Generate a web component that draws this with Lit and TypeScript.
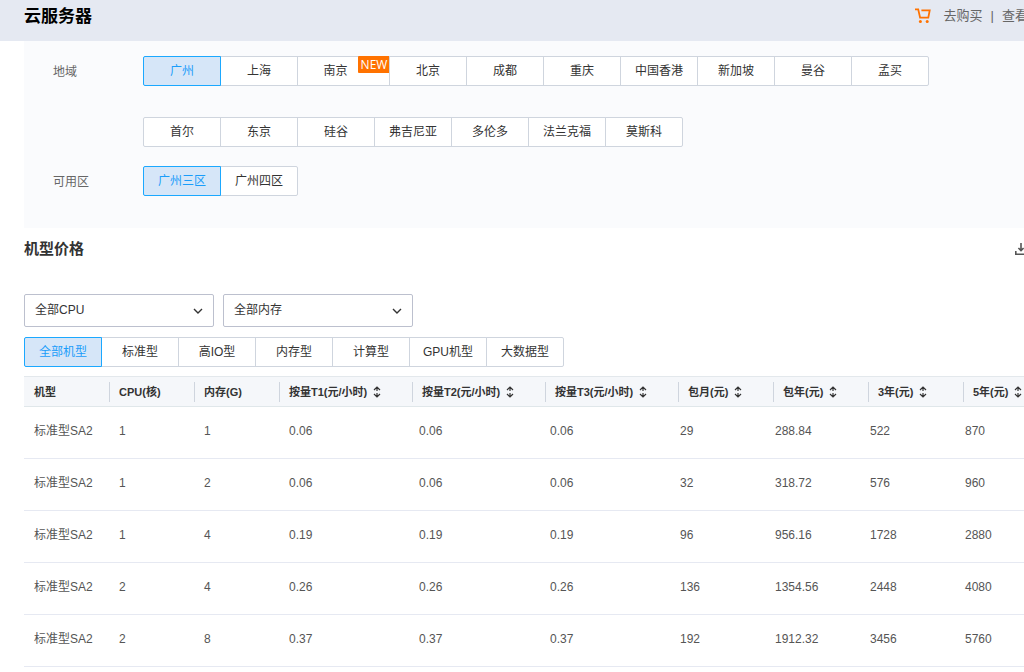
import { LitElement, html, css, svg } from "lit";
import { customElement, property, state } from "lit/decorators.js";
import { classMap } from "lit/directives/class-map.js";

interface Option {
  label: string;
  isNew?: boolean;
}

const REGIONS: Option[][] = [
  [
    { label: "广州" },
    { label: "上海" },
    { label: "南京", isNew: true },
    { label: "北京" },
    { label: "成都" },
    { label: "重庆" },
    { label: "中国香港" },
    { label: "新加坡" },
    { label: "曼谷" },
    { label: "孟买" },
  ],
  [
    { label: "首尔" },
    { label: "东京" },
    { label: "硅谷" },
    { label: "弗吉尼亚" },
    { label: "多伦多" },
    { label: "法兰克福" },
    { label: "莫斯科" },
  ],
];

const ZONES: Option[] = [{ label: "广州三区" }, { label: "广州四区" }];

const MODELS: Option[] = [
  { label: "全部机型" },
  { label: "标准型" },
  { label: "高IO型" },
  { label: "内存型" },
  { label: "计算型" },
  { label: "GPU机型" },
  { label: "大数据型" },
];

const COLUMNS = [
  { label: "机型" },
  { label: "CPU(核)" },
  { label: "内存(G)" },
  { label: "按量T1(元/小时)", sortable: true },
  { label: "按量T2(元/小时)", sortable: true },
  { label: "按量T3(元/小时)", sortable: true },
  { label: "包月(元)", sortable: true },
  { label: "包年(元)", sortable: true },
  { label: "3年(元)", sortable: true },
  { label: "5年(元)", sortable: true },
];

const ROWS = [
  ["标准型SA2", "1", "1", "0.06", "0.06", "0.06", "29", "288.84", "522", "870"],
  ["标准型SA2", "1", "2", "0.06", "0.06", "0.06", "32", "318.72", "576", "960"],
  ["标准型SA2", "1", "4", "0.19", "0.19", "0.19", "96", "956.16", "1728", "2880"],
  ["标准型SA2", "2", "4", "0.26", "0.26", "0.26", "136", "1354.56", "2448", "4080"],
  ["标准型SA2", "2", "8", "0.37", "0.37", "0.37", "192", "1912.32", "3456", "5760"],
];

/** A joined row of buttons of which one is selected. */
@customElement("button-group")
export class ButtonGroup extends LitElement {
  @property({ attribute: false }) options: Option[] = [];
  @property() value = "";

  static styles = css`
    :host {
      display: flex;
    }
    .option {
      position: relative;
      box-sizing: border-box;
      min-width: 78px;
      height: 30px;
      margin: 0 0 0 -1px;
      padding: 0 10px;
      border: 1px solid #cfd5de;
      background: #fff;
      color: #333;
      font: inherit;
      line-height: 28px;
      white-space: nowrap;
      cursor: pointer;
    }
    .option:first-child {
      margin-left: 0;
      border-radius: 2px 0 0 2px;
    }
    .option:last-child {
      border-radius: 0 2px 2px 0;
    }
    .option.new {
      min-width: 93px;
      padding-right: 26px;
    }
    .option.selected {
      z-index: 1;
      border-color: #1ba8ff;
      background: #d6e6f8;
      color: #1a9dfa;
    }
    .badge {
      position: absolute;
      top: -1px;
      right: -1px;
      width: 32px;
      border-radius: 1px;
      background: #ff7200;
      color: #fff;
      font: 12px/17px "Open Sans", "Noto Sans", sans-serif;
      text-align: center;
    }
  `;

  private pick(label: string) {
    this.dispatchEvent(new CustomEvent("pick", { detail: label }));
  }

  render() {
    return this.options.map(
      (o) => html`<button
        type="button"
        class=${classMap({ option: true, new: !!o.isNew, selected: o.label === this.value })}
        aria-pressed=${o.label === this.value}
        @click=${() => this.pick(o.label)}
      >${o.label}${o.isNew ? html`<span class="badge">NEW</span>` : ""}</button>`
    );
  }
}

@customElement("app-root")
export class AppRoot extends LitElement {
  @state() private region = "广州";
  @state() private zone = "广州三区";
  @state() private model = "全部机型";

  static styles = css`
    :host {
      display: block;
      overflow: hidden;
      min-height: 100vh;
      background: #fff;
      color: #333;
      font: 12px/18px "Liberation Sans", "Noto Sans CJK SC", sans-serif;
    }
    .page {
      min-width: 1052px;
    }
    .topbar {
      display: flex;
      align-items: flex-start;
      justify-content: space-between;
      box-sizing: border-box;
      height: 41px;
      padding: 4px 24px 0;
      background: #e5e9f2;
    }
    .title {
      margin: 0;
      color: #000;
      font-size: 17px;
      line-height: 26px;
    }
    .actions {
      display: flex;
      align-items: center;
      gap: 8px;
      color: #666;
      font-size: 13px;
      line-height: 24px;
    }
    .link {
      color: inherit;
      text-decoration: none;
    }
    .buy {
      display: flex;
      align-items: center;
      gap: 13px;
    }
    .main {
      padding: 0 24px;
    }
    .filters {
      display: grid;
      grid-template-columns: 90px 1fr;
      align-items: start;
      row-gap: 19px;
      padding: 15px 0 32px 29px;
      background: #fafbfd;
    }
    .label {
      color: #666;
      line-height: 32px;
      height: 30px;
    }
    .region-rows {
      display: grid;
      gap: 31px;
    }
    .section-head {
      display: flex;
      align-items: center;
      justify-content: space-between;
      padding: 8px 0 32px;
    }
    .section-title {
      margin: 0;
      font-size: 15px;
      line-height: 26px;
    }
    .download {
      display: flex;
      padding: 0;
      border: 0;
      background: none;
      cursor: pointer;
    }
    .selects {
      display: flex;
      gap: 9px;
      margin-bottom: 10px;
    }
    .select-box {
      display: grid;
      align-items: center;
      width: 190px;
    }
    .select {
      grid-area: 1 / 1;
      appearance: none;
      height: 33px;
      padding: 0 30px 1px 10px;
      border: 1px solid #bcc0ce;
      border-radius: 2px;
      background: #fff;
      color: #333;
      font: inherit;
    }
    .chevron {
      grid-area: 1 / 1;
      justify-self: end;
      margin-right: 11px;
      pointer-events: none;
    }
    .table,
    .head,
    .body {
      display: block;
    }
    .table {
      margin-top: 9px;
    }
    .row {
      display: grid;
      align-items: center;
    }
    .head .row {
      grid-template-columns: repeat(3, 85px) repeat(3, 133px) repeat(3, 95px) minmax(66px, 1fr);
      height: 29px;
      border-top: 1px solid #e3e8ec;
      border-bottom: 1px solid #e0e7ea;
      background: #f5f7fa;
    }
    .body .row {
      grid-template-columns: repeat(3, 85px) 130px 131px 130px repeat(3, 95px) minmax(66px, 1fr);
      height: 51px;
      border-bottom: 1px solid #e6e9f2;
    }
    .th {
      box-sizing: border-box;
      height: 20px;
      padding: 0 0 0 9px;
      border-left: 1px solid #cfd5de;
      font-size: 11px;
      font-weight: bold;
      line-height: 20px;
      text-align: left;
      white-space: nowrap;
    }
    .th:first-child {
      border-left-color: transparent;
    }
    .sort {
      display: flex;
      align-items: center;
      gap: 6px;
      padding: 0;
      border: 0;
      background: none;
      color: inherit;
      font: inherit;
      cursor: pointer;
    }
    .td {
      padding: 0 0 4px 10px;
      color: #555;
    }
  `;

  private sortIcon() {
    return html`<svg width="8" height="12" viewBox="0 0 8 12" fill="none" stroke="#333" stroke-width="1.2">
      ${svg`<path d="M4 5V1M1 4l3-3 3 3M4 7v4M1 8l3 3 3-3" />`}
    </svg>`;
  }

  private selectBox(name: string, text: string) {
    return html`<label class="select-box">
      <select class="select" aria-label=${name}><option>${text}</option></select>
      <svg class="chevron" width="10" height="8" viewBox="0 0 10 8" fill="none" stroke="#333" stroke-width="1.4">
        <path d="M1 2l4 4 4-4" />
      </svg>
    </label>`;
  }

  render() {
    return html`
      <div class="page">
        <header class="topbar">
          <h1 class="title">云服务器</h1>
          <nav class="actions">
            <a class="link buy" href="#buy">
              <svg width="16" height="16" viewBox="0 0 16 16" fill="none" stroke="#ff7200" stroke-width="1.8">
                <path d="M0 1.4h3.2l1.9 8.3h8.2l1.4-7.4H6.4" />
                <circle cx="5.4" cy="13.6" r="1.5" fill="#ff7200" stroke="none" />
                <circle cx="12.2" cy="13.6" r="1.5" fill="#ff7200" stroke="none" />
              </svg>
              <span>去购买</span>
            </a>
            <span>|</span>
            <a class="link" href="#view">查看</a>
          </nav>
        </header>
        <main class="main">
          <section class="filters">
            <span class="label">地域</span>
            <div class="region-rows">
              ${REGIONS.map(
                (r) => html`<button-group
                  .options=${r}
                  .value=${this.region}
                  @pick=${(e: CustomEvent) => (this.region = e.detail)}
                ></button-group>`
              )}
            </div>
            <span class="label">可用区</span>
            <button-group
              .options=${ZONES}
              .value=${this.zone}
              @pick=${(e: CustomEvent) => (this.zone = e.detail)}
            ></button-group>
          </section>
          <div class="section-head">
            <h2 class="section-title">机型价格</h2>
            <button class="download" type="button" aria-label="下载">
              <svg width="14" height="14" viewBox="0 0 14 14" fill="none" stroke="#555" stroke-width="1.6">
                <path d="M7 1v7M4.4 6L7 8.6 9.6 6M1.8 9v3.2h10.4V9" />
              </svg>
            </button>
          </div>
          <div class="selects">
            ${this.selectBox("CPU", "全部CPU")} ${this.selectBox("内存", "全部内存")}
          </div>
          <button-group
            .options=${MODELS}
            .value=${this.model}
            @pick=${(e: CustomEvent) => (this.model = e.detail)}
          ></button-group>
          <table class="table">
            <thead class="head">
              <tr class="row">
                ${COLUMNS.map(
                  (c) => html`<th class="th" scope="col">${c.sortable
                    ? html`<button class="sort" type="button">${c.label}${this.sortIcon()}</button>`
                    : c.label}</th>`
                )}
              </tr>
            </thead>
            <tbody class="body">
              ${ROWS.map(
                (r) => html`<tr class="row">${r.map((v) => html`<td class="td">${v}</td>`)}</tr>`
              )}
            </tbody>
          </table>
        </main>
      </div>
    `;
  }
}
